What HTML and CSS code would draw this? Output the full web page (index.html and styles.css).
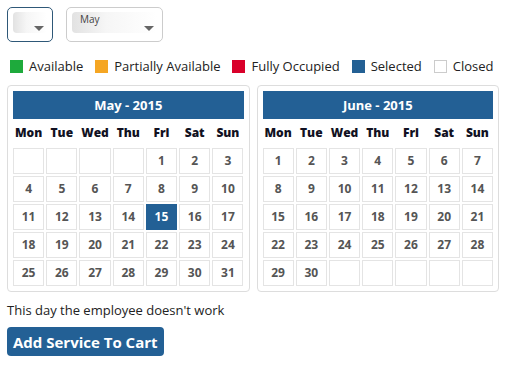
FILE: index.html
```
<!DOCTYPE html>
<html lang="en">
<head>
    <title>Booking</title>
    <link rel="stylesheet" href="styles.css">
</head>
<body>
    <div class="selects">
        <div class="select active"><div class="inner"></div><span class="arrow"></span></div>
        <div class="select wide"><div class="inner">May</div><span class="arrow"></span></div>
    </div>
    <div class="legend">
        <span class="item"><span class="sq green"></span>Available</span>
        <span class="item"><span class="sq orange"></span>Partially Available</span>
        <span class="item"><span class="sq red"></span>Fully Occupied</span>
        <span class="item"><span class="sq blue"></span>Selected</span>
        <span class="item"><span class="sq white"></span>Closed</span>
    </div>
    <div class="calendars">
        <div class="cal">
            <div class="cal-head">May - 2015</div>
            <div class="days"><span>Mon</span><span>Tue</span><span>Wed</span><span>Thu</span><span>Fri</span><span>Sat</span><span>Sun</span></div>
            <div class="grid" id="may"></div>
        </div>
        <div class="cal">
            <div class="cal-head">June - 2015</div>
            <div class="days"><span>Mon</span><span>Tue</span><span>Wed</span><span>Thu</span><span>Fri</span><span>Sat</span><span>Sun</span></div>
            <div class="grid" id="june"></div>
        </div>
    </div>
    <p class="note">This day the employee doesn't work</p>
    <button class="cart">Add Service To Cart</button>
    <script>
        function fill(id, offset, days, selected) {
            let grid = document.getElementById(id);
            for (let i = 0; i < 35; i++) {
                let cell = document.createElement("div");
                cell.className = "cell";
                let d = i - offset + 1;
                if (d >= 1 && d <= days) {
                    cell.textContent = d;
                    if (d == selected) cell.className += " sel";
                }
                grid.appendChild(cell);
            }
        }
        fill("may", 4, 31, 15);
        fill("june", 0, 30, 0);
    </script>
</body>
</html>
```

FILE: styles.css
```
body{
    margin: 0;
    padding: 7px;
    font-family: 'Open Sans', sans-serif;
    color: #222;
    background: #fff;
}
.selects{
    display: flex;
    gap: 13px;
    height: 35px;
}
.select{
    position: relative;
    width: 46px;
    box-sizing: border-box;
    border: 1px solid #ccc;
    border-radius: 5px;
    padding: 4px 5px;
}
.select.active{
    border: 1.5px solid #2e5878;
}
.select.wide{
    width: 97px;
}
.inner{
    height: 21px;
    border-radius: 4px;
    background: linear-gradient(to right, #e2e2e2, #f6f6f6 40%, #fff);
    font-size: 10px;
    color: #444;
    padding-left: 8px;
    line-height: 14px;
}
.arrow{
    position: absolute;
    right: 8px;
    top: 18px;
    border-left: 5px solid transparent;
    border-right: 5px solid transparent;
    border-top: 5px solid #666;
}
.legend{
    display: flex;
    margin: 15px 0 0 3px;
    height: 18px;
    align-items: center;
    font-size: 13px;
    color: #222;
    white-space: nowrap;
}
.item{
    display: flex;
    align-items: center;
    flex-shrink: 0;
    margin-right: 12px;
}
.sq{
    width: 13px;
    height: 13px;
    box-sizing: border-box;
    margin-right: 6px;
}
.green{ background: #1eaa3c; }
.orange{ background: #f5a623; }
.red{ background: #d9002a; }
.blue{ background: #236094; }
.white{ border: 1px solid #ccc; }
.calendars{
    display: flex;
    gap: 7px;
    margin-top: 10px;
}
.cal{
    width: 243px;
    box-sizing: border-box;
    border: 1px solid #ddd;
    border-radius: 4px;
    padding: 5px;
}
.cal-head{
    background: #236095;
    color: #fff;
    font-weight: bold;
    font-size: 13px;
    text-align: center;
    height: 28px;
    line-height: 28px;
}
.days{
    display: grid;
    grid-template-columns: repeat(7, 1fr);
    gap: 2px;
    height: 27px;
    line-height: 28px;
    font-size: 12px;
    font-weight: 800;
    text-align: center;
    color: #111122;
}
.grid{
    display: grid;
    grid-template-columns: repeat(7, 1fr);
    grid-auto-rows: 26px;
    gap: 2px;
    margin-top: 2px;
}
.cell{
    border: 1px solid #e4e4e4;
    font-size: 12px;
    font-weight: bold;
    color: #555;
    text-align: center;
    line-height: 24px;
}
.cell.sel{
    background: #236095;
    border-color: #236095;
    color: #fff;
}
.note{
    font-size: 13px;
    margin: 9px 0 0 0;
    line-height: 18px;
}
.cart{
    margin-top: 8px;
    background: #236095;
    color: #fff;
    border: none;
    border-radius: 4px;
    font-family: 'Open Sans', sans-serif;
    font-weight: bold;
    font-size: 15px;
    height: 29px;
    padding: 0 6px;
}
```
